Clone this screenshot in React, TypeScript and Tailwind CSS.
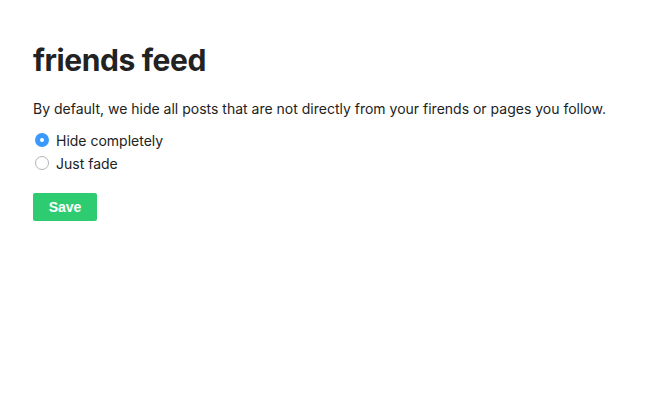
export default function App() {
  return (
    <div className="min-h-[403px] bg-white px-[33px] pt-[40px] font-['Inter',sans-serif] text-[#222]">
      <h1 className="text-[30px] font-bold leading-[40px] tracking-[-0.4px]">friends feed</h1>
      <p className="mt-[19px] text-[14px] leading-[20px]">
        By default, we hide all posts that are not directly from your firends or pages you follow.
      </p>
      <div className="mt-[11px] flex flex-col gap-[3px]">
        <Radio label="Hide completely" checked />
        <Radio label="Just fade" />
      </div>
      <button className="mt-[20px] h-[28px] w-[64px] rounded-[2px] bg-[#2ecc71] font-['Liberation_Sans',Arial,sans-serif] text-[14px] font-bold text-white">
        Save
      </button>
    </div>
  );
}

function Radio({ label, checked = false }: { label: string; checked?: boolean }) {
  return (
    <label className="flex h-[20px] items-center gap-[7px] text-[14px]">
      {checked ? (
        <span className="ml-[2px] flex h-[14px] w-[14px] items-center justify-center rounded-full bg-[#3b99fc]">
          <span className="h-[4px] w-[4px] rounded-full bg-white" />
        </span>
      ) : (
        <span className="ml-[2px] h-[14px] w-[14px] rounded-full border border-[#b4b4b4] bg-white" />
      )}
      <span>{label}</span>
    </label>
  );
}
